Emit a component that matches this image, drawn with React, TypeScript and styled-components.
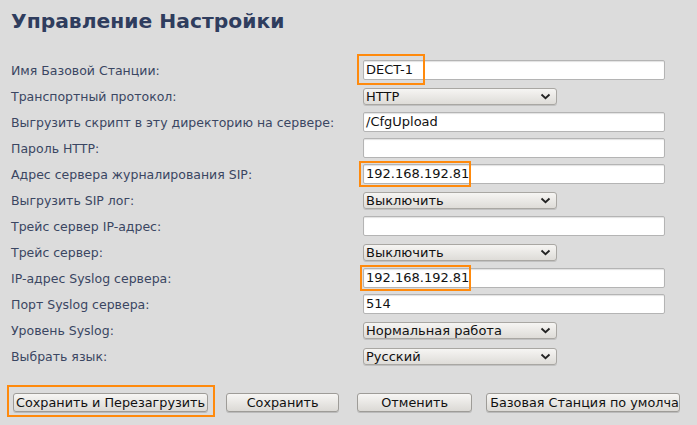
import React from "react";
import styled, { createGlobalStyle } from "styled-components";

const Global = createGlobalStyle`
  html, body { margin: 0; padding: 0; background: #dcdcdc; }
  body { font-family: "DejaVu Sans", "Liberation Sans", sans-serif; }
`;

const Page = styled.div`
  width: 697px;
  height: 425px;
  overflow: hidden;
  padding: 0 0 0 11px;
  box-sizing: border-box;
  background: #dcdcdc;
`;

const Title = styled.h1`
  margin: 0;
  padding-top: 8px;
  font-size: 20.3px;
  line-height: 26px;
  font-weight: bold;
  letter-spacing: 0;
  color: #2f3d5e;
`;

const Form = styled.div`
  display: grid;
  grid-template-columns: 352px 1fr;
  grid-auto-rows: 26px;
  margin-top: 23px;
`;

const Label = styled.div`
  display: flex;
  align-items: center;
  font-size: 12.5px;
  color: #3a4662;
  padding-top: 1px;
  white-space: nowrap;
`;

const Cell = styled.div`
  position: relative;
  display: flex;
  align-items: center;
`;

const Input = styled.div`
  box-sizing: border-box;
  width: 302px;
  height: 20px;
  background: #fff;
  border: 1px solid #b4b4b4;
  border-radius: 2px;
  box-shadow: inset 0 1px 1px rgba(0, 0, 0, 0.12);
  font-size: 13px;
  line-height: 18px;
  color: #111;
  padding-left: 2px;
  white-space: nowrap;
`;

const Select = styled.div`
  box-sizing: border-box;
  width: 194px;
  height: 17px;
  display: flex;
  align-items: center;
  justify-content: space-between;
  border: 1px solid #a9a7a3;
  border-radius: 3px;
  background: linear-gradient(#f6f5f3, #dedcd8);
  box-shadow: 0 1px 0 rgba(0, 0, 0, 0.12);
  font-size: 13px;
  color: #111;
  padding: 0 5px 0 2px;
  white-space: nowrap;
`;

const Highlight = styled.div<{ $l: number; $t: number; $w: number; $h: number }>`
  position: absolute;
  left: ${(p) => p.$l}px;
  top: ${(p) => p.$t}px;
  width: ${(p) => p.$w}px;
  height: ${(p) => p.$h}px;
  box-sizing: border-box;
  border: 2px solid #ff8a0d;
  pointer-events: none;
`;

const Buttons = styled.div`
  display: flex;
  align-items: center;
  margin-top: 24px;
  padding-left: 2px;
`;

const BtnWrap = styled.div<{ $gap: number }>`
  position: relative;
  margin-right: ${(p) => p.$gap}px;
`;

const Button = styled.div<{ $w?: number }>`
  box-sizing: border-box;
  height: 19px;
  ${(p) => (p.$w ? `width: ${p.$w}px;` : "")}
  display: flex;
  align-items: center;
  justify-content: ${(p) => (p.$w ? "center" : "flex-start")};
  padding: 0 2px;
  border: 1px solid #9e9c98;
  border-radius: 3px;
  background: linear-gradient(#f7f6f4, #dbd9d5);
  box-shadow: 0 1px 0 rgba(0, 0, 0, 0.15);
  font-size: 12.8px;
  color: #111;
  white-space: nowrap;
  overflow: hidden;
`;

const Clip = styled(Button)`
  justify-content: flex-start;
  padding-left: 3px;
`;

const Chevron = () => (
  <svg width="11" height="7" viewBox="0 0 11 7">
    <path d="M1.5 1.5 L5.5 5.2 L9.5 1.5" fill="none" stroke="#222" strokeWidth="1.8" />
  </svg>
);

type Row =
  | { label: string; kind: "input"; value: string; hl?: [number, number, number, number] }
  | { label: string; kind: "select"; value: string };

const rows: Row[] = [
  { label: "Имя Базовой Станции:", kind: "input", value: "DECT-1", hl: [-6, -3, 68, 31] },
  { label: "Транспортный протокол:", kind: "select", value: "HTTP" },
  { label: "Выгрузить скрипт в эту директорию на сервере:", kind: "input", value: "/CfgUpload" },
  { label: "Пароль HTTP:", kind: "input", value: "" },
  { label: "Адрес сервера журналирования SIP:", kind: "input", value: "192.168.192.81", hl: [-4, 0, 112, 26] },
  { label: "Выгрузить SIP лог:", kind: "select", value: "Выключить" },
  { label: "Трейс сервер IP-адрес:", kind: "input", value: "" },
  { label: "Трейс сервер:", kind: "select", value: "Выключить" },
  { label: "IP-адрес Syslog сервера:", kind: "input", value: "192.168.192.81", hl: [-3, 0, 111, 26] },
  { label: "Порт Syslog сервера:", kind: "input", value: "514" },
  { label: "Уровень Syslog:", kind: "select", value: "Нормальная работа" },
  { label: "Выбрать язык:", kind: "select", value: "Русский" },
];

export default function App() {
  return (
    <Page>
      <Global />
      <Title>Управление Настройки</Title>
      <Form>
        {rows.map((r, i) => (
          <React.Fragment key={i}>
            <Label>{r.label}</Label>
            <Cell>
              {r.kind === "input" ? (
                <Input>{r.value}</Input>
              ) : (
                <Select>
                  <span>{r.value}</span>
                  <Chevron />
                </Select>
              )}
              {r.kind === "input" && r.hl && (
                <Highlight $l={r.hl[0]} $t={r.hl[1]} $w={r.hl[2]} $h={r.hl[3]} />
              )}
            </Cell>
          </React.Fragment>
        ))}
      </Form>
      <Buttons>
        <BtnWrap $gap={18}>
          <Button>Сохранить и Перезагрузить</Button>
          <Highlight $l={-6} $t={-8} $w={208} $h={32} />
        </BtnWrap>
        <BtnWrap $gap={18}>
          <Button $w={113}>Сохранить</Button>
        </BtnWrap>
        <BtnWrap $gap={14}>
          <Button $w={115}>Отменить</Button>
        </BtnWrap>
        <BtnWrap $gap={0}>
          <Clip $w={194}>Базовая Станция по умолчанию</Clip>
        </BtnWrap>
      </Buttons>
    </Page>
  );
}
